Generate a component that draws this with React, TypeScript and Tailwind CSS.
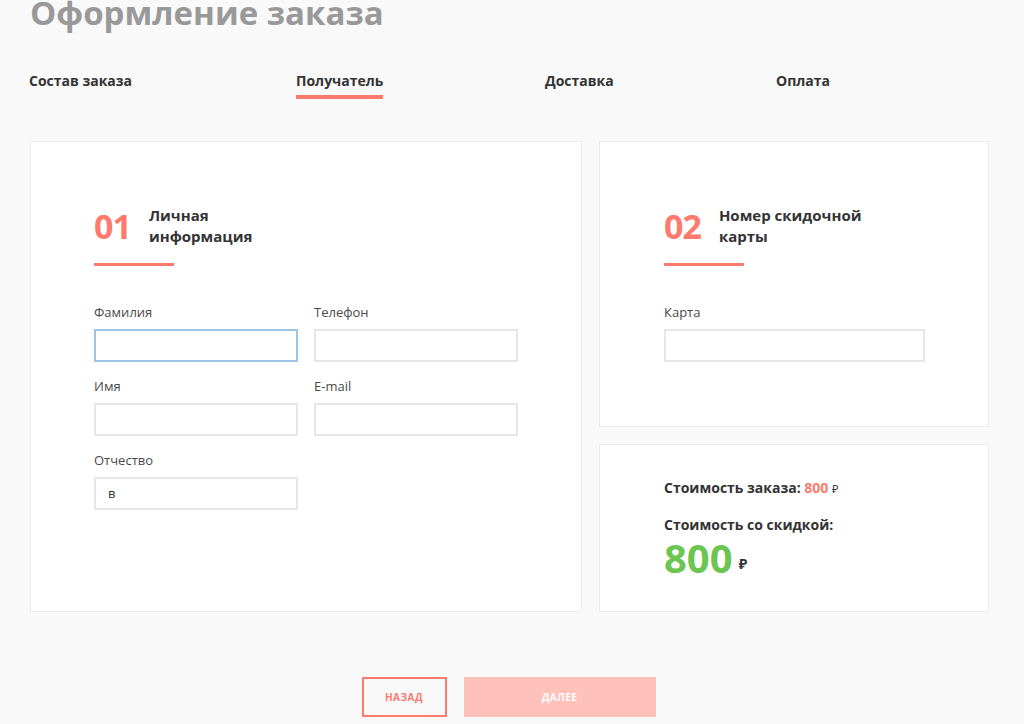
import React from "react";

const font = { fontFamily: '"Open Sans", "Noto Sans", sans-serif' };

function Field({ label, value, focused, w = "w-[204px]" }: { label: string; value?: string; focused?: boolean; w?: string }) {
  return (
    <div className={`flex flex-col ${w}`}>
      <div className="text-[13px] leading-[16px] text-[#4a4a4a] mb-[9px]">{label}</div>
      <div
        className={`h-[33px] border-2 bg-white flex items-center px-[12px] text-[13px] text-[#333] ${
          focused ? "border-[#9ec5e6]" : "border-[#e6e6e6]"
        }`}
      >
        {value}
      </div>
    </div>
  );
}

function SectionHead({ num, title }: { num: string; title: React.ReactNode }) {
  return (
    <div className="flex flex-col">
      <div className="flex items-start gap-[18px]">
        <div className="text-[34px] leading-[34px] font-bold text-[#ff7a6e] mt-[4px] tracking-[-1px]">{num}</div>
        <div className="text-[15px] leading-[21px] font-bold text-[#333]">{title}</div>
      </div>
      <div className="w-[80px] h-[3px] bg-[#ff7a6e] mt-[16px]" />
    </div>
  );
}

export default function App() {
  return (
    <div className="w-[1024px] h-[724px] bg-[#f9f9f9] overflow-hidden" style={font}>
      <div className="pl-[30px]">
        <h1 className="text-[33px] leading-[34px] font-bold text-[#999] -mt-[4px]">Оформление заказа</h1>
        <div className="flex mt-[40px] pl-0 -ml-[1px] text-[14px] font-bold text-[#333]">
          <div className="w-[267px]">Состав заказа</div>
          <div className="w-[249px]">
            <div className="inline-flex flex-col">
              <span>Получатель</span>
              <span className="h-[4px] bg-[#ff7a6e] mt-[4px]" />
            </div>
          </div>
          <div className="w-[231px]">Доставка</div>
          <div>Оплата</div>
        </div>
      </div>

      <div className="flex gap-[17px] pl-[30px] mt-[42px]">
        <div className="w-[552px] h-[471px] bg-white border border-[#ececec] pl-[63px] pt-[63px]">
          <SectionHead num="01" title={<>Личная<br />информация</>} />
          <div className="grid grid-cols-[204px_204px] gap-x-[16px] gap-y-[16px] mt-[38px]">
            <Field label="Фамилия" focused />
            <Field label="Телефон" />
            <Field label="Имя" />
            <Field label="E-mail" />
            <Field label="Отчество" value="в" />
          </div>
        </div>
        <div className="flex flex-col gap-[17px]">
          <div className="w-[390px] h-[286px] bg-white border border-[#ececec] pl-[64px] pt-[63px]">
            <SectionHead num="02" title={<>Номер скидочной<br />карты</>} />
            <div className="mt-[38px]">
              <Field label="Карта" w="w-[261px]" />
            </div>
          </div>
          <div className="w-[390px] h-[168px] bg-white border border-[#ececec] pl-[64px] pt-[34px]">
            <div className="text-[14px] font-bold text-[#333] leading-[18px]">
              Стоимость заказа: <span className="text-[#ff7a6e]">800</span>{" "}
              <span className="text-[11px] font-normal">₽</span>
            </div>
            <div className="text-[14px] font-bold text-[#333] leading-[18px] mt-[18px]">Стоимость со скидкой:</div>
            <div className="flex items-end gap-[6px] mt-[2px]">
              <span className="text-[40px] leading-[44px] font-bold text-[#6cc551]">800</span>
              <span className="text-[14px] font-bold text-[#333] mb-[6px]">₽</span>
            </div>
          </div>
        </div>
      </div>

      <div className="flex justify-center gap-[17px] mt-[65px] pr-[7px]">
        <div className="w-[85px] h-[40px] border-2 border-[#ff7a6e] flex items-center justify-center text-[10px] font-bold text-[#ff7a6e] tracking-[0.5px]">
          НАЗАД
        </div>
        <div className="w-[192px] h-[40px] bg-[#ffc2ba] flex items-center justify-center text-[10px] font-bold text-white tracking-[0.5px]">
          ДАЛЕЕ
        </div>
      </div>
    </div>
  );
}
